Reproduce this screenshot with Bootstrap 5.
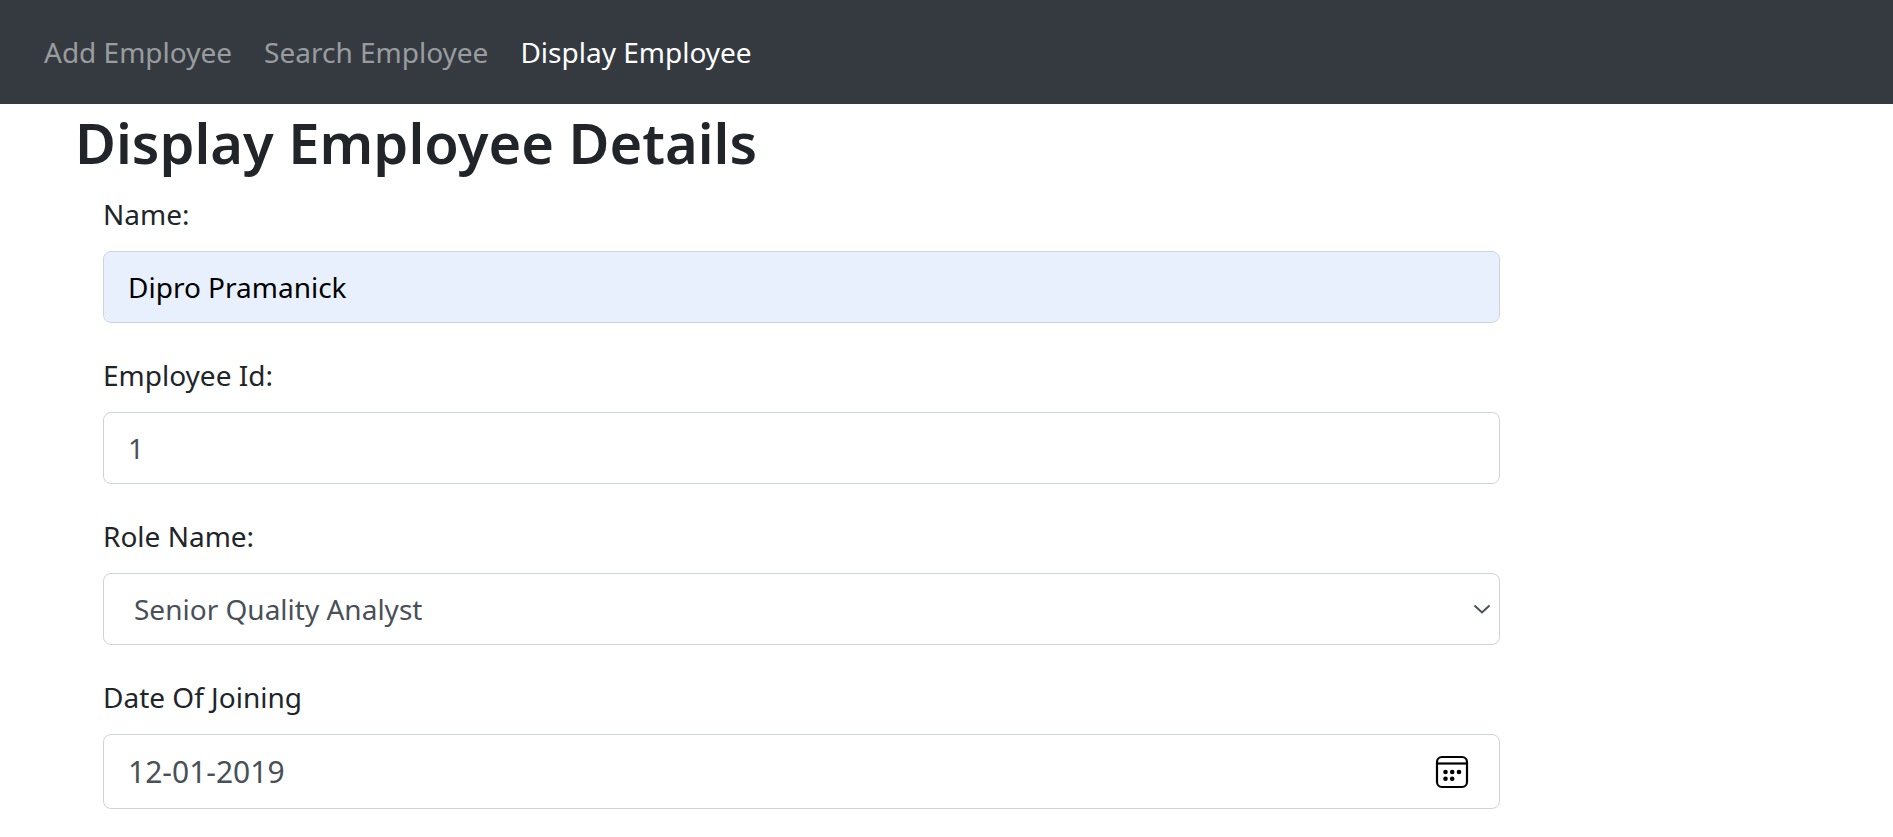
<!DOCTYPE html>
<html lang="en">
<head>
<meta charset="utf-8">
<meta name="viewport" content="width=device-width, initial-scale=1">
<title>Display Employee</title>
<link rel="stylesheet" href="https://cdn.jsdelivr.net/npm/bootstrap@5.3.0/dist/css/bootstrap.min.css">
<style>
  body { font-family: "Noto Sans", "Open Sans", sans-serif; font-size: 28px; line-height: 45px; color: #212529; }
  .site-nav { background: #343a40; padding: 15px 28px; --bs-navbar-color: rgba(255,255,255,.5); --bs-navbar-hover-color: rgba(255,255,255,.75); --bs-navbar-active-color: #fff; }
  .site-nav .navbar-nav .nav-link { padding: 15px 16px; line-height: 44px; }
  .page { padding: 0 75px; }
  .page-title { font-size: 56px; line-height: 76px; font-weight: 600; margin-bottom: 12px; }
  .form-area { padding: 0 28px; }
  .field { margin-bottom: 30px; }
  .field:last-child { margin-bottom: 0; }
  .field .form-label { display: block; margin-bottom: 14px; line-height: 45px; }
  .field .form-control, .field .form-select { height: 72px; padding: 11px 24px; font-size: 28px; line-height: 45px; color: #495057; border: 1px solid #ced4da; border-radius: 8px; background-color: #fff; }
  .field .form-select { padding-left: 30px; background-position: right 8px center; background-size: 18px 18px;
    background-image: url("data:image/svg+xml,%3Csvg xmlns='http://www.w3.org/2000/svg' viewBox='0 0 18 18'%3E%3Cpath d='M1.500 5.500l7.500 7 7.500-7' fill='none' stroke='%23495057' stroke-width='2'/%3E%3C/svg%3E"); }
  .field .autofilled { background-color: #e8f0fe; color: #000; }
  .field .date-box { height: 75px; font-size: 30px; }
  .date-btn { right: 31px; line-height: 0; }
</style>
</head>
<body>
<nav class="navbar navbar-expand site-nav">
  <ul class="navbar-nav">
    <li class="nav-item"><a class="nav-link" href="#">Add Employee</a></li>
    <li class="nav-item"><a class="nav-link" href="#">Search Employee</a></li>
    <li class="nav-item"><a class="nav-link active" aria-current="page" href="#">Display Employee</a></li>
  </ul>
</nav>
<main class="page">
  <h1 class="page-title">Display Employee Details</h1>
  <form class="col-10 form-area">
    <div class="field">
      <label class="form-label" for="name">Name:</label>
      <input class="form-control autofilled" id="name" type="text" value="Dipro Pramanick">
    </div>
    <div class="field">
      <label class="form-label" for="empId">Employee Id:</label>
      <input class="form-control" id="empId" type="text" value="1">
    </div>
    <div class="field">
      <label class="form-label" for="role">Role Name:</label>
      <select class="form-select" id="role"><option>Senior Quality Analyst</option></select>
    </div>
    <div class="field">
      <label class="form-label" for="joined">Date Of Joining</label>
      <div class="position-relative">
        <input class="form-control date-box" id="joined" type="text" value="12-01-2019">
        <button type="button" class="date-btn btn border-0 p-0 position-absolute top-50 translate-middle-y" aria-label="Choose date">
          <svg width="34" height="34" viewBox="0 0 34 34" fill="none" stroke="#000" stroke-width="2.200">
            <rect x="2" y="2" width="30" height="30" rx="5"/>
            <path d="M2 8.500h30"/>
            <g fill="#000" stroke="none"><circle cx="10.500" cy="17" r="2.300"/><circle cx="17.200" cy="17" r="2.300"/><circle cx="24" cy="17" r="2.300"/><circle cx="10.500" cy="23.700" r="2.300"/><circle cx="17.200" cy="23.700" r="2.300"/></g>
          </svg>
        </button>
      </div>
    </div>
  </form>
</main>
<script src="https://cdn.jsdelivr.net/npm/bootstrap@5.3.0/dist/js/bootstrap.bundle.min.js"></script>
</body>
</html>
